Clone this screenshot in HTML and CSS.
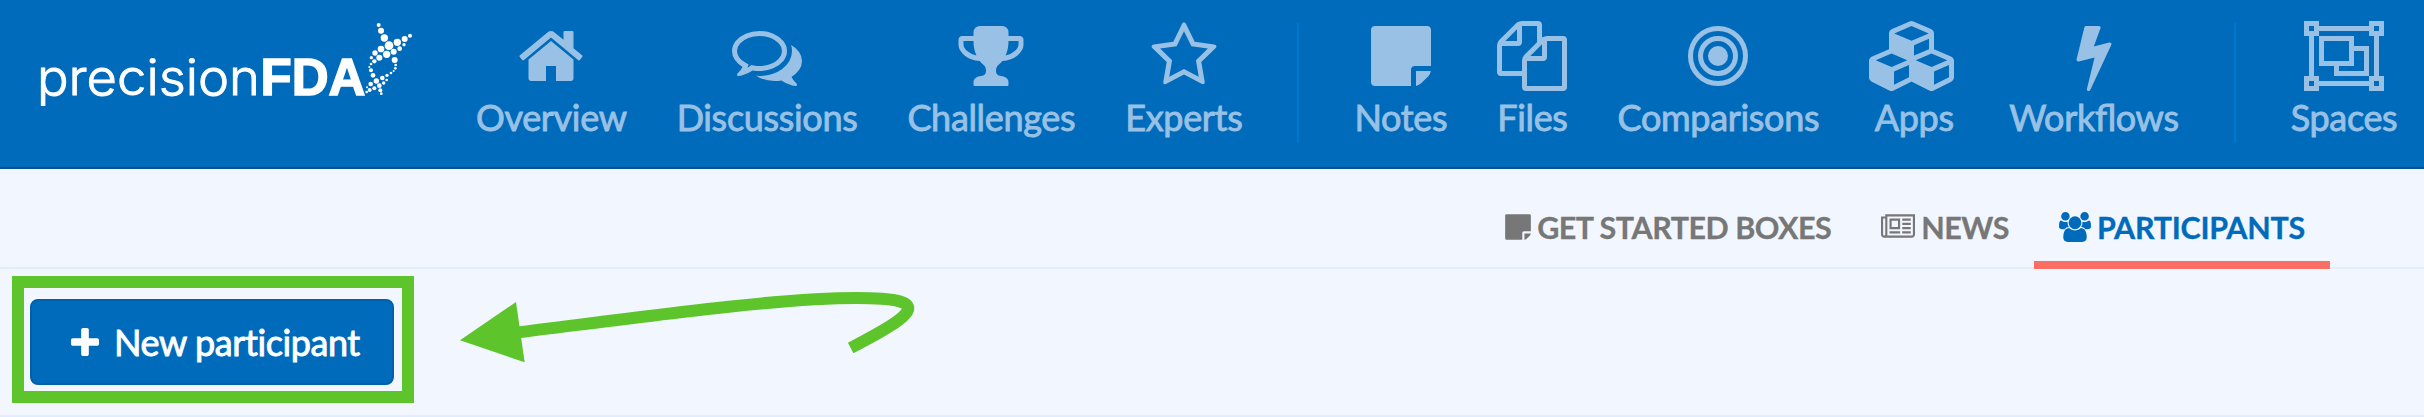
FILE: index.html
```html
<!DOCTYPE html>
<html lang="en">
<head>
<meta charset="utf-8">
<title>precisionFDA</title>
<link rel="stylesheet" href="styles.css">
</head>
<body>
<header class="header">
  <a class="brand">
    <svg class="logo" viewBox="0 0 440 167" width="440" height="167">
      <text class="logo-light" x="37" y="95" textLength="223" lengthAdjust="spacingAndGlyphs">precision</text>
      <text class="logo-bold" x="260.500" y="95" textLength="105" lengthAdjust="spacingAndGlyphs">FDA</text>
      <g transform="scale(.33333)" fill="#fff">
        <circle cx="1136" cy="75" r="6"/><circle cx="1143" cy="92" r="9"/><circle cx="1153" cy="114" r="11"/><circle cx="1167" cy="137" r="13"/><circle cx="1192" cy="127" r="11"/><circle cx="1214" cy="117" r="9"/><circle cx="1230" cy="107" r="6"/><circle cx="1212" cy="134" r="5"/><circle cx="1199" cy="146" r="7"/><circle cx="1181" cy="155" r="9"/><circle cx="1160" cy="163" r="11"/><circle cx="1143" cy="147" r="10"/><circle cx="1125" cy="159" r="8"/><circle cx="1138" cy="173" r="9"/><circle cx="1123" cy="184" r="6.500"/><circle cx="1114" cy="173" r="5"/><circle cx="1113" cy="192" r="4"/><circle cx="1108" cy="201" r="3"/><circle cx="1113" cy="211" r="6"/><circle cx="1119" cy="226" r="7"/><circle cx="1129" cy="243" r="8"/><circle cx="1147" cy="234" r="7"/><circle cx="1161" cy="226" r="5"/><circle cx="1173" cy="219" r="4"/><circle cx="1181" cy="213" r="3"/><circle cx="1186" cy="205" r="4"/><circle cx="1187" cy="195" r="4"/><circle cx="1184" cy="180" r="9"/><circle cx="1160" cy="240" r="4"/><circle cx="1151" cy="249" r="5"/><circle cx="1138" cy="257" r="7"/><circle cx="1123" cy="265" r="6"/><circle cx="1112" cy="252" r="7"/><circle cx="1109" cy="270" r="6"/><circle cx="1101" cy="262" r="3"/><circle cx="1100" cy="276" r="4"/><circle cx="1141" cy="271" r="6"/><circle cx="1144" cy="281" r="4"/>
      </g>
    </svg>
  </a>
  <nav class="nav">
    <a class="item overview"><svg class="icon" viewBox="0 0 1792 1792"><path d="M1472 992v480q0 26-19 45t-45 19h-384v-384h-256v384h-384q-26 0-45-19t-19-45v-480q0-1 .5-3t.5-3l575-474 575 474q1 2 1 6zm223-69l-62 74q-8 9-21 11h-3q-13 0-21-7l-692-577-692 577q-12 8-24 7-13-2-21-11l-62-74q-8-10-7-23.500t11-21.500l719-599q32-26 76-26t76 26l244 204v-195q0-14 9-23t23-9h192q14 0 23 9t9 23v408l219 182q10 8 11 21.500t-7 23.500z"/></svg><span>Overview</span></a>
    <a class="item discussions"><svg class="icon" viewBox="0 0 1792 1792"><path d="M704 384q-153 0-286 52t-211.500 141-78.500 191q0 82 53 158t149 132l97 56-35 84q34-20 62-39l44-31 53 10q78 14 153 14 153 0 286-52t211.500-141 78.500-191-78.500-191-211.500-141-286-52zm0-128q191 0 353.500 68.500t256.500 186.500 94 257-94 257-256.500 186.500-353.500 68.500q-86 0-176-16-124 88-278 128-36 9-86 16h-3q-11 0-20.500-8t-11.500-21q-1-3-1-6.500t.5-6.500 2-6l2.500-5 3.500-5.500 4-5 4.500-5 4-4.500q5-6 23-25t26-29.500 22.500-29 25-38.500 20.500-44q-124-72-195-177t-71-224q0-139 94-257t256.500-186.500 353.500-68.500zm822 1169q10 24 20.500 44t25 38.500 22.500 29 26 29.500 23 25q1 1 4 4.500t4.500 5 4 5 3.500 5.500l2.500 5 2 6 .5 6.500-1 6.500q-3 14-13 22t-22 7q-50-7-86-16-154-40-278-128-90 16-176 16-271 0-472-132 58 4 88 4 161 0 309-45t264-129q125-92 192-212t67-254q0-77-23-152 129 71 204 178t75 230q0 120-71 224.500t-195 176.500z"/></svg><span>Discussions</span></a>
    <a class="item challenges"><svg class="icon" viewBox="0 0 1792 1792"><path d="M522 883q-74-162-74-371h-256v96q0 78 94.500 162t235.500 113zm1078-275v-96h-256q0 209-74 371 141-29 235.500-113t94.500-162zm128-128v128q0 71-41.500 143t-112 130-173 97.500-215.500 44.500q-42 54-95 95-38 34-52.500 72.500t-14.500 89.500q0 54 30.500 91t97.500 37q75 0 133.500 45.500t58.500 114.500v64q0 14-9 23t-23 9h-832q-14 0-23-9t-9-23v-64q0-69 58.500-114.500t133.500-45.500q67 0 97.500-37t30.500-91q0-51-14.500-89.500t-52.500-72.500q-53-41-95-95-113-5-215.500-44.500t-173-97.500-112-130-41.500-143v-128q0-40 28-68t68-28h288v-96q0-66 47-113t113-47h576q66 0 113 47t47 113v96h288q40 0 68 28t28 68z"/></svg><span>Challenges</span></a>
    <a class="item experts"><svg class="icon" viewBox="0 0 1792 1792"><path d="M1201 1004l306-297-422-62-189-382-189 382-422 62 306 297-73 421 378-199 377 199zm527-357q0 22-26 48l-363 354 86 500q1 7 1 20 0 50-41 50-19 0-40-12l-449-236-449 236q-22 12-40 12-21 0-31.500-14.500t-10.500-35.500q0-6 2-20l86-500-364-354q-25-27-25-48 0-37 56-46l502-73 225-455q19-41 49-41t49 41l225 455 502 73q56 9 56 46z"/></svg><span>Experts</span></a>
    <i class="divider"></i>
    <a class="item notes"><svg class="icon" viewBox="0 0 1792 1792"><path d="M1152 1248v416h-928q-40 0-68-28t-28-68v-1344q0-40 28-68t68-28h1344q40 0 68 28t28 68v928h-416q-40 0-68 28t-28 68zm128 32h381q-15 82-65 132l-184 184q-50 50-132 65v-381z"/></svg><span>Notes</span></a>
    <a class="item files"><svg class="icon" viewBox="0 0 1792 1792"><path d="M1696 384q40 0 68 28t28 68v1216q0 40-28 68t-68 28h-960q-40 0-68-28t-28-68v-288h-544q-40 0-68-28t-28-68v-672q0-40 20-88t48-76l408-408q28-28 76-48t88-20h416q40 0 68 28t28 68v328q68-40 128-40h416zm-544 213l-299 299h299v-299zm-640-384l-299 299h299v-299zm196 647l316-316v-416h-384v416q0 40-28 68t-68 28h-416v640h512v-256q0-40 20-88t48-76zm956 804v-1152h-384v416q0 40-28 68t-68 28h-416v640h896z"/></svg><span>Files</span></a>
    <a class="item comparisons"><svg class="icon" viewBox="0 0 1792 1792"><circle cx="896" cy="896" r="256"/><g fill="none" stroke="currentColor" stroke-width="128"><circle cx="896" cy="896" r="448"/><circle cx="896" cy="896" r="704"/></g></svg><span>Comparisons</span></a>
    <a class="item apps"><svg class="icon icon-cubes" viewBox="0 0 2304 1792"><path d="M640 1632l384-192v-314l-384 164v342zm-64-454l404-173-404-173-404 173zm1088 454l384-192v-314l-384 164v342zm-64-454l404-173-404-173-404 173zm-448-293l384-165v-266l-384 164v267zm-64-379l441-189-441-189-441 189zm1088 518v416q0 36-19 67t-52 47l-448 224q-25 14-57 14t-57-14l-448-224q-4-2-7-4-2 2-7 4l-448 224q-25 14-57 14t-57-14l-448-224q-33-16-52-47t-19-67v-416q0-38 21.500-70t56.500-48l434-186v-400q0-38 21.500-70t56.500-48l448-192q23-10 50-10t50 10l448 192q35 16 56.500 48t21.500 70v400l434 186q36 16 57 48t21 70z"/></svg><span>Apps</span></a>
    <a class="item workflows"><svg class="icon" viewBox="0 0 1792 1792"><path d="M1333 566q18 20 7 44l-540 1157q-13 25-42 25-4 0-14-2-17-5-25.500-19t-4.500-30l197-808-406 101q-4 1-12 1-18 0-31-11-18-15-13-39l201-825q4-14 16-23t28-9h328q19 0 32 12.500t13 29.500q0 8-5 18l-171 463 396-98q8-2 12-2 19 0 34 15z"/></svg><span>Workflows</span></a>
    <i class="divider"></i>
    <a class="item spaces"><svg class="icon icon-group" viewBox="0 0 2048 1792"><path fill-rule="evenodd" d="M2048 384h-128v1024h128v384h-384v-128h-1280v128h-384v-384h128v-1024h-128v-384h384v128h1280v-128h384zM1792 128v128h128v-128zM128 128v128h128v-128zM128 1536v128h128v-128zM1792 1536v128h128v-128zM1792 1408v-1024h-128v-128h-1280v128h-128v1024h128v128h1280v-128zM384 384h896v256h384v768h-896v-256h-384zM512 512v512h640v-512zM1280 768h256v512h-640v-128h384z"/></svg><span>Spaces</span></a>
  </nav>
</header>
<section class="tabs">
  <a class="tab"><svg class="tab-icon" viewBox="128 0 1536 1792" width="26" height="30"><path d="M1152 1248v416h-928q-40 0-68-28t-28-68v-1344q0-40 28-68t68-28h1344q40 0 68 28t28 68v928h-416q-40 0-68 28t-28 68zm128 32h381q-15 82-65 132l-184 184q-50 50-132 65v-381z"/></svg><span>GET STARTED BOXES</span></a>
  <a class="tab"><svg class="tab-icon" viewBox="0 0 2048 1792" width="34" height="30"><path d="M1024 512h-384v384h384v-384zm128 640v128h-640v-128h640zm0-768v640h-640v-640h640zm640 768v128h-512v-128h512zm0-256v128h-512v-128h512zm0-256v128h-512v-128h512zm0-256v128h-512v-128h512zm-1536 960v-960h-128v960q0 26 19 45t45 19 45-19 19-45zm1664 0v-1088h-1536v1088q0 33-11 64h1483q26 0 45-19t19-45zm128-1216v1216q0 80-56 136t-136 56h-1664q-80 0-136-56t-56-136v-1088h256v-128h1792z"/></svg><span>NEWS</span></a>
  <a class="tab active"><svg class="tab-icon" viewBox="0 0 1920 1792" width="32" height="30"><path d="M593 896q-162 5-265 128h-134q-82 0-138-40.500t-56-118.500q0-353 124-353 6 0 43.500 21t97.500 42.500 119 21.500q67 0 133-23-5 37-5 66 0 139 81 256zm1071 637q0 120-73 189.500t-194 69.500h-874q-121 0-194-69.500t-73-189.500q0-53 3.500-103.500t14-109 26.500-108.500 43-97.500 62-81 85.500-53.500 111.500-20q10 0 43 21.500t73 48 107 48 135 21.500 135-21.500 107-48 73-48 43-21.500q61 0 111.500 20t85.500 53.500 62 81 43 97.500 26.500 108.500 14 109 3.500 103.500zm-1024-1277q0 106-75 181t-181 75-181-75-75-181 75-181 181-75 181 75 75 181zm704 384q0 159-112.500 271.500t-271.500 112.500-271.500-112.500-112.500-271.500 112.500-271.500 271.500-112.500 271.500 112.500 112.500 271.500zm576 225q0 78-56 118.500t-138 40.500h-134q-103-123-265-128 81-117 81-256 0-29-5-66 66 23 133 23 59 0 119-21.500t97.500-42.500 43.500-21q124 0 124 353zm-128-609q0 106-75 181t-181 75-181-75-75-181 75-181 181-75 181 75 75 181z"/></svg><span>PARTICIPANTS</span></a>
</section>
<main class="toolbar">
  <div class="highlight">
    <button class="button"><svg viewBox="192 128 1408 1408" width="28" height="28"><path d="M1600 736v192q0 40-28 68t-68 28h-416v416q0 40-28 68t-68 28h-192q-40 0-68-28t-28-68v-416h-416q-40 0-68-28t-28-68v-192q0-40 28-68t68-28h416v-416q0-40 28-68t68-28h192q40 0 68 28t28 68v416h416q40 0 68 28t28 68z"/></svg><span>New participant</span></button>
  </div>
  <svg class="arrow" viewBox="0 0 1500 438" width="500" height="146"><path class="arrow-line" d="M1232 234C1434 130 1482 84 1250 84C1020 84 640 136 235 187"/><path class="arrow-head" d="M60 211L228 96L254 277Z"/></svg>
</main>
</body>
</html>
```
FILE: styles.css
```css
* { box-sizing: border-box; }
body {
  margin: 0;
  width: 2424px;
  height: 417px;
  overflow: hidden;
  background: #f2f7ff;
  font-family: Lato, sans-serif;
}
.header {
  display: flex;
  height: 169px;
  background: #006bbb;
  border-bottom: 2px solid #00518e;
}
.brand { flex: none; width: 451px; }
.logo { display: block; fill: #fff; }
.logo-light { font: 300 50px Inter, sans-serif; stroke: #fff; stroke-width: .9px; }
.logo-bold { font: 700 51px "Liberation Sans", Arial, sans-serif; stroke: #fff; stroke-width: 1.5px; }
.nav { display: flex; color: #98c1e5; }
.item {
  display: flex;
  flex-direction: column;
  align-items: center;
  padding: 21px 25px 0;
  font-size: 36px;
  line-height: 50px;
  letter-spacing: -.33px;
  font-feature-settings: "liga" 1;
  -webkit-text-stroke: .9px currentColor;
}
.item span { margin-top: 1px; white-space: nowrap; }
.icon { flex: none; width: 70px; height: 70px; fill: currentColor; stroke-width: 0; }
.icon-cubes { width: 90px; }
.icon-group { width: 80px; }
.divider { width: 2px; height: 120px; margin: 23px 30px 0; background: #0076d3; }
.tabs {
  display: flex;
  justify-content: flex-end;
  height: 100px;
  padding-right: 94px;
  border-bottom: 2px solid #e1ecfc;
}
.tab {
  display: flex;
  align-items: center;
  gap: 6px;
  height: 100px;
  padding: 23px 25px 0;
  border-bottom: 8px solid transparent;
  color: #777;
  font-size: 30.500px;
  font-weight: 700;
  letter-spacing: -.5px;
  white-space: nowrap;
}
.tab span { -webkit-text-stroke: .3px currentColor; }
.tab.active { color: #006bbb; border-color: #fb6e64; letter-spacing: -.25px; }
.tab-icon { fill: currentColor; }
.toolbar {
  display: flex;
  height: 148px;
  padding: 7px 12px;
  border-bottom: 2px solid #e1ecfc;
}
.highlight {
  width: 402px;
  height: 127px;
  padding: 11px 6px 6px;
  border: 12px solid #5dc42b;
}
.button {
  display: flex;
  align-items: center;
  width: 364px;
  height: 86px;
  padding: 0 0 0 39px;
  gap: 15px;
  border: 2px solid #0061aa;
  border-radius: 8px;
  background: #006bbb;
  color: #fff;
  fill: #fff;
  font: 36px Lato, sans-serif;
  letter-spacing: -.4px;
  white-space: nowrap;
}
.button span { -webkit-text-stroke: .9px currentColor; }
.arrow { margin: -6px 0 0 26px; }
.arrow-line { fill: none; stroke: #5dc42b; stroke-width: 36; }
.arrow-head { fill: #5dc42b; }
```
